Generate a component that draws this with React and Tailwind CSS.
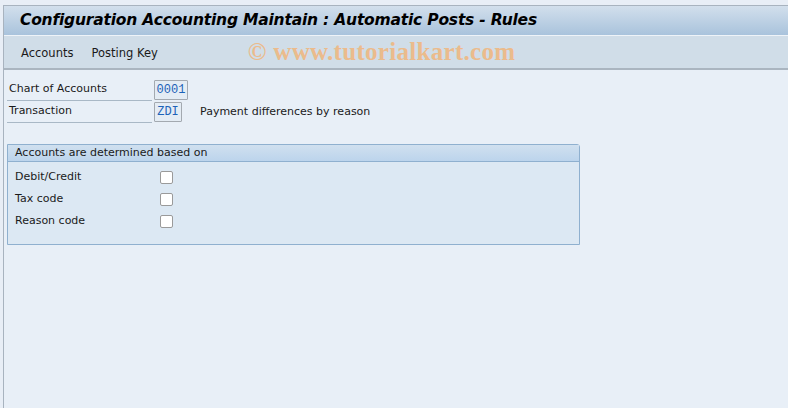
import React from 'react';

const ui = { fontFamily: '"DejaVu Sans", "Liberation Sans", sans-serif' };
const mono = { fontFamily: '"Liberation Mono", "DejaVu Sans Mono", monospace' };

const FieldRow = ({ label, value, boxWidth, note }) => (
  <div className="flex items-center h-[22px]">
    <div className="w-[145px] h-[21px] flex items-center pl-[2px] border-b border-[#a9b8c6] text-[11px] text-[#1a1a1a]">
      {label}
    </div>
    <div
      className="ml-[2px] h-[20px] flex items-center justify-center border border-[#a3a9b0] bg-[#e4ecf4] text-[12px] text-[#1d62b8] rounded-[1px]"
      style={{ ...mono, width: boxWidth }}
    >
      {value}
    </div>
    {note && <div className="ml-[18px] text-[11px] text-[#1a1a1a]">{note}</div>}
  </div>
);

const CheckRow = ({ label }) => (
  <div className="flex items-center h-[22px]">
    <div className="w-[145px] text-[11px] text-[#1a1a1a]">{label}</div>
    <div className="w-[13px] h-[13px] border border-[#9a9a9a] rounded-[2px] bg-white" />
  </div>
);

export default function App() {
  return (
    <div className="w-[788px] h-[408px] bg-[#e8eef6] overflow-hidden" style={ui}>
      <div className="h-[5px]" />
      <div className="ml-[3px] h-[403px] border-l border-t border-[#a8b3bf] flex flex-col">
        <div className="h-[30px] flex items-center pl-[16px] bg-gradient-to-b from-[#d2dfec] to-[#a9c3dc] border-b border-[#eef3f8]">
          <span className="text-[15.5px] font-bold italic text-black tracking-[-0.2px]">
            Configuration Accounting Maintain : Automatic Posts - Rules
          </span>
        </div>
        <div className="h-[34px] flex items-center bg-[#d0dde8] border-b-2 border-[#aab5c0] text-[11.5px] text-[#1a1a1a]">
          <span className="ml-[17px] mt-[3px]">Accounts</span>
          <span className="ml-[18px] mt-[3px]">Posting Key</span>
          <span
            className="ml-[90px] text-[25px] font-bold text-[#ebbb8c] tracking-[0.3px]"
            style={{ fontFamily: '"Liberation Serif", "DejaVu Serif", serif' }}
          >
            © www.tutorialkart.com
          </span>
        </div>
        <div className="flex-1 bg-[#e8eff7] pl-[3px] pt-[9px]">
          <FieldRow label="Chart of Accounts" value="0001" boxWidth="34px" />
          <FieldRow label="Transaction" value="ZDI" boxWidth="28px" note="Payment differences by reason" />
          <div className="mt-[21px] w-[573px] h-[101px] border border-[#8fb0cf] bg-[#dce8f3] rounded-tr-[3px] flex flex-col">
            <div className="h-[17px] flex items-center pl-[7px] bg-gradient-to-b from-[#d0e0ef] to-[#bcd4ec] border-b border-[#8fb0cf] text-[11px] text-[#1a1a1a]">
              Accounts are determined based on
            </div>
            <div className="pl-[7px] pt-[4px]">
              <CheckRow label="Debit/Credit" />
              <CheckRow label="Tax code" />
              <CheckRow label="Reason code" />
            </div>
          </div>
        </div>
      </div>
    </div>
  );
}
